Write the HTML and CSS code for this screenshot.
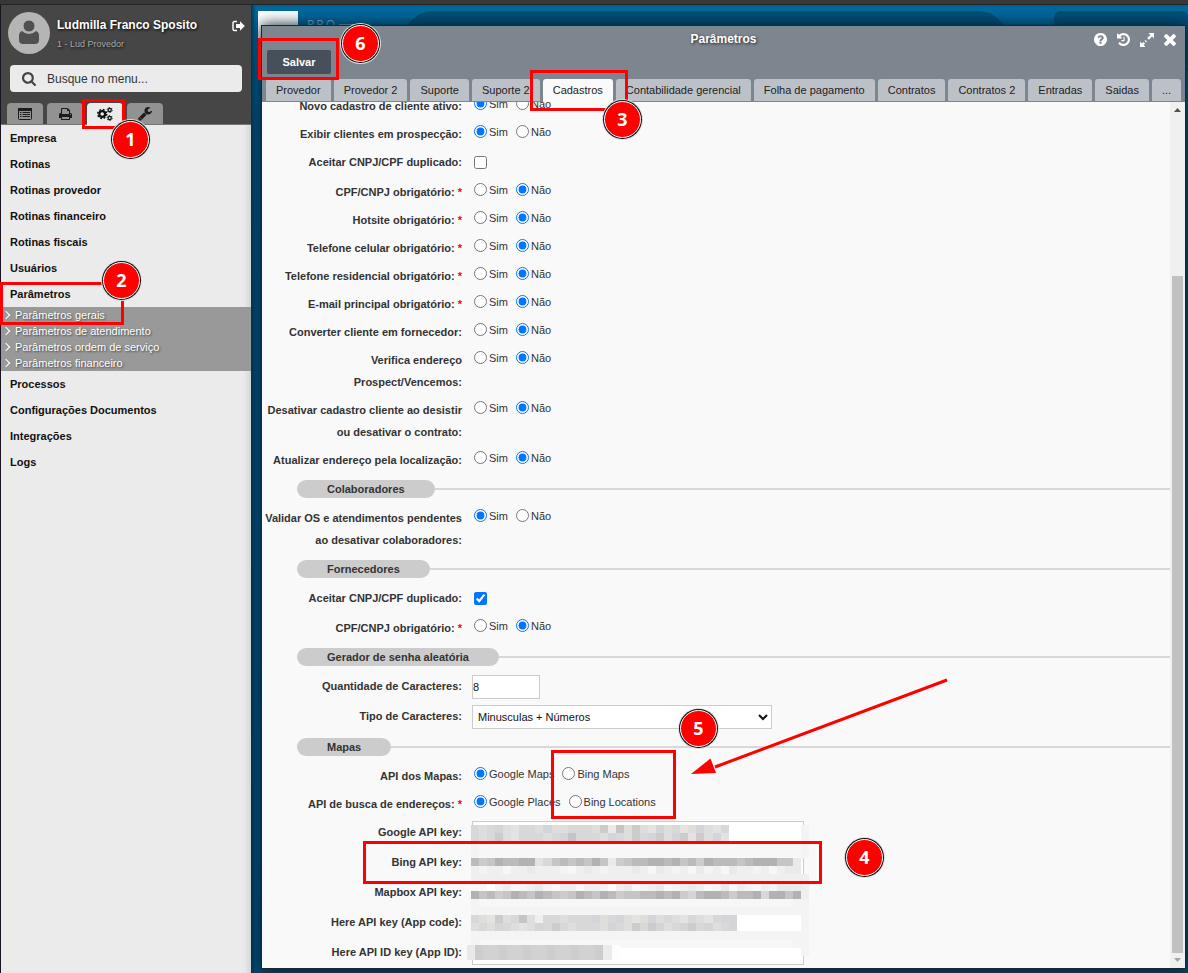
FILE: index.html
```html
<!DOCTYPE html>
<html lang="pt-BR">
<head>
<meta charset="utf-8">
<title>Parâmetros</title>
<link rel="stylesheet" href="styles.css">
</head>
<body>
<div class="topbar"></div>
<div class="app">
  <aside class="sidebar">
    <header class="side-head">
      <div class="user">
        <svg class="avatar" viewBox="0 0 42 42" aria-hidden="true"><circle cx="21" cy="21" r="21" fill="#b5b5b5"/><path d="M14 19q-3 1-3 5v4q0 4 4 4h12q4 0 4-4v-4q0-4-3-5q-3 3-7 3t-7-3z" fill="#505050"/><circle cx="21" cy="14" r="6" fill="#505050" stroke="#b5b5b5"/></svg>
        <div class="user-text">
          <strong class="user-name">Ludmilla Franco Sposito</strong>
          <span class="user-org">1 - Lud Provedor</span>
        </div>
        <button class="icon-btn logout" aria-label="Sair"><svg width="13" height="12" viewBox="0 0 13 12"><path d="M5 1.5H2.5Q1 1.500 1 3v6q0 1.500 1.500 1.500H5" fill="none" stroke="#fff" stroke-width="1.400"/><path d="M4 4h4V1.200L12.800 6 8 10.800V8H4z" fill="#fff"/></svg></button>
      </div>
      <label class="search">
        <svg width="14" height="14" viewBox="64 128 1664 1664" aria-hidden="true"><path fill="#444" d="M1216 832q0-185-131.500-316.500t-316.500-131.500-316.500 131.500-131.500 316.500 131.500 316.500 316.500 131.500 316.500-131.500 131.500-316.500zm512 832q0 52-38 90t-90 38q-54 0-90-38l-343-342q-179 124-399 124-143 0-273.500-55.500t-225-150-150-225-55.500-273.500 55.500-273.500 150-225 225-150 273.500-55.500 273.500 55.500 225 150 150 225 55.500 273.500q0 220-124 399l343 343q37 37 37 90z"/></svg>
        <input class="search-input" type="text" placeholder="Busque no menu..." aria-label="Busque no menu">
      </label>
      <nav class="side-tabs">
        <button class="side-tab" aria-label="Menu"><svg width="14" height="12" viewBox="0 0 14 12"><rect x=".5" y=".5" width="13" height="11" rx="1" fill="none" stroke="#1c1c1c"/><path d="M0 0h14v3H0z" fill="#1c1c1c"/><path d="M2 4.500h1.500M2 6.500h1.500M2 8.500h1.500M4.500 4.500H12M4.500 6.500H12M4.500 8.500H12" stroke="#1c1c1c"/></svg></button>
        <button class="side-tab" aria-label="Imprimir"><svg width="13" height="12" viewBox="64 128 1664 1536"><path fill="#1c1c1c" d="M448 1536h896v-256h-896v256zm0-640h896v-384h-160q-40 0-68-28t-28-68v-160h-640v640zm1152 64q0-26-19-45t-45-19-45 19-19 45 19 45 45 19 45-19 19-45zm128 0v416q0 13-9.500 22.500t-22.500 9.500h-224v160q0 40-28 68t-68 28h-960q-40 0-68-28t-28-68v-160h-224q-13 0-22.500-9.500t-9.500-22.500v-416q0-79 56.500-135.500t135.500-56.500h64v-544q0-40 28-68t68-28h672q40 0 88 20t76 48l152 152q28 28 48 76t20 88v256h64q79 0 135.500 56.500t56.500 135.500z"/></svg></button>
        <button class="side-tab active" aria-label="Configurações"><svg width="16" height="14" viewBox="0 0 16 14"><g fill="none" stroke="#111"><circle cx="5.200" cy="7" r="2.900" stroke-width="2.200"/><circle cx="5.200" cy="7" r="4.500" stroke-width="1.500" stroke-dasharray="1.850 1.684"/><circle cx="12.700" cy="3" r="1.600" stroke-width="1.300"/><circle cx="12.700" cy="3" r="2.500" stroke-width="1" stroke-dasharray="1.300 1.318"/><circle cx="12.700" cy="11" r="1.600" stroke-width="1.300"/><circle cx="12.700" cy="11" r="2.500" stroke-width="1" stroke-dasharray="1.300 1.318"/></g></svg></button>
        <button class="side-tab" aria-label="Ferramentas"><svg width="14" height="14" viewBox="64 128 1664 1664"><path fill="#1c1c1c" d="M448 1472q0-26-19-45t-45-19-45 19-19 45 19 45 45 19 45-19 19-45zm644-420l-682 682q-37 37-90 37-52 0-91-37l-106-108q-38-36-38-90 0-53 38-91l681-681q39 98 114.500 173.500t173.500 114.500zm634-435q0 39-23 106-47 134-164.500 217.500t-258.500 83.500q-185 0-316.500-131.500t-131.500-316.500 131.500-316.500 316.500-131.500q58 0 121.500 16.500t107.500 46.500q16 11 16 28t-16 28l-293 169v224l193 107q5-3 79-48.500t135.500-81 70.500-35.500q15 0 23.500 10t8.500 25z"/></svg></button>
      </nav>
    </header>
    <nav class="menu">
      <a class="menu-item" href="#">Empresa</a>
      <a class="menu-item" href="#">Rotinas</a>
      <a class="menu-item" href="#">Rotinas provedor</a>
      <a class="menu-item" href="#">Rotinas financeiro</a>
      <a class="menu-item" href="#">Rotinas fiscais</a>
      <a class="menu-item" href="#">Usuários</a>
      <a class="menu-item" href="#">Parâmetros</a>
      <div class="submenu">
        <a class="sub-item" href="#">Parâmetros gerais</a>
        <a class="sub-item" href="#">Parâmetros de atendimento</a>
        <a class="sub-item" href="#">Parâmetros ordem de serviço</a>
        <a class="sub-item" href="#">Parâmetros financeiro</a>
      </div>
      <a class="menu-item" href="#">Processos</a>
      <a class="menu-item" href="#">Configurações Documentos</a>
      <a class="menu-item" href="#">Integrações</a>
      <a class="menu-item" href="#">Logs</a>
    </nav>
  </aside>

  <main class="desktop">
    <div class="backdrop" aria-hidden="true">
      <div class="logo"></div>
      <span class="brand">PRO</span>
      <span class="dash"></span>
      <div class="pill"></div>
      <div class="panel"></div>
    </div>
    <section class="window">
      <header class="win-head">
        <div class="titlebar">
          <h1 class="title">Parâmetros</h1>
          <div class="win-icons">
            <button class="icon-btn" aria-label="Ajuda"><svg width="13" height="13" viewBox="128 128 1536 1536"><path fill="#fff" d="M1024 1376v-192q0-14-9-23t-23-9h-192q-14 0-23 9t-9 23v192q0 14 9 23t23 9h192q14 0 23-9t9-23zm256-672q0-88-55.500-163t-138.500-116-170-41q-243 0-371 213-15 24 8 42l132 100q7 6 19 6 16 0 25-12 53-68 86-92 34-24 86-24 48 0 85.500 26t37.500 59q0 38-20 61t-68 45q-63 28-115.500 86.500t-52.500 125.500v36q0 14 9 23t23 9h192q14 0 23-9t9-23q0-19 21.500-49.500t54.500-49.500q32-18 49-28.500t46-35 44.500-48 28-60.500 12.500-81zm384 192q0 209-103 385.500t-279.500 279.500-385.500 103-385.500-103-279.500-279.500-103-385.500 103-385.500 279.500-279.500 385.500-103 385.500 103 279.500 279.500 103 385.500z"/></svg></button>
            <button class="icon-btn" aria-label="Histórico"><svg width="13" height="13" viewBox="128 128 1536 1536"><path fill="#fff" d="M1664 896q0 156-61 298t-164 245-245 164-298 61q-172 0-327-72.500t-264-204.500q-7-10-6.500-22.500t8.500-20.500l137-138q10-9 25-9 16 2 23 12 73 95 179 147t225 52q104 0 198.500-40.500t163.500-109.500 109.500-163.500 40.500-198.500-40.500-198.500-109.500-163.500-163.500-109.500-198.500-40.500q-98 0-188 35.500t-160 101.500l137 138q31 30 14 69-17 40-59 40h-448q-26 0-45-19t-19-45v-448q0-42 40-59 39-17 69 14l130 129q107-101 244.500-156.500t284.500-55.500q156 0 298 61t245 164 164 245 61 298zm-640-288v448q0 14-9 23t-23 9h-320q-14 0-23-9t-9-23v-64q0-14 9-23t23-9h224v-352q0-14 9-23t23-9h64q14 0 23 9t9 23z"/></svg></button>
            <button class="icon-btn" aria-label="Expandir"><svg width="14" height="14" viewBox="0 0 14 14"><path d="M8.500 0H14v5.500l-1.900-1.900-3.200 3.200-1.700-1.700 3.200-3.200zM0 8.500l1.900 1.900 1.500-1.500 1.700 1.700-1.500 1.500L5.500 14H0z" fill="#fff"/><path d="M4.600 7.800l.8-.8 1.600 1.600-.8.800z" fill="#fff"/></svg></button>
            <button class="icon-btn" aria-label="Fechar"><svg width="12" height="12" viewBox="302 366 1188 1188"><path fill="#fff" d="M1490 1322q0 40-28 68l-136 136q-28 28-68 28t-68-28l-294-294-294 294q-28 28-68 28t-68-28l-136-136q-28-28-28-68t28-68l294-294-294-294q-28-28-28-68t28-68l136-136q28-28 68-28t68 28l294 294 294-294q28-28 68-28t68 28l136 136q28 28 28 68t-28 68l-294 294 294 294q28 28 28 68z"/></svg></button>
          </div>
        </div>
        <div class="toolbar"><button class="save">Salvar</button></div>
        <nav class="tabs">
          <button class="tab">Provedor</button>
          <button class="tab">Provedor 2</button>
          <button class="tab">Suporte</button>
          <button class="tab">Suporte 2</button>
          <button class="tab active">Cadastros</button>
          <button class="tab">Contabilidade gerencial</button>
          <button class="tab">Folha de pagamento</button>
          <button class="tab">Contratos</button>
          <button class="tab">Contratos 2</button>
          <button class="tab">Entradas</button>
          <button class="tab">Saidas</button>
          <button class="tab">...</button>
        </nav>
      </header>
      <div class="win-body">
        <form class="form">
          <div class="row"><span class="label" id="l1">Novo cadastro de cliente ativo:</span><div class="options" role="radiogroup" aria-labelledby="l1"><label class="opt"><input type="radio" name="r1" checked>Sim</label><label class="opt"><input type="radio" name="r1">Não</label></div></div>
          <div class="row"><span class="label" id="l2">Exibir clientes em prospecção:</span><div class="options" role="radiogroup" aria-labelledby="l2"><label class="opt"><input type="radio" name="r2" checked>Sim</label><label class="opt"><input type="radio" name="r2">Não</label></div></div>
          <div class="row tall"><label class="label" for="c1">Aceitar CNPJ/CPF duplicado:</label><div class="check"><input type="checkbox" id="c1"></div></div>
          <div class="row"><span class="label" id="l3">CPF/CNPJ obrigatório: <b class="req">*</b></span><div class="options" role="radiogroup" aria-labelledby="l3"><label class="opt"><input type="radio" name="r3">Sim</label><label class="opt"><input type="radio" name="r3" checked>Não</label></div></div>
          <div class="row"><span class="label" id="l4">Hotsite obrigatório: <b class="req">*</b></span><div class="options" role="radiogroup" aria-labelledby="l4"><label class="opt"><input type="radio" name="r4">Sim</label><label class="opt"><input type="radio" name="r4" checked>Não</label></div></div>
          <div class="row"><span class="label" id="l5">Telefone celular obrigatório: <b class="req">*</b></span><div class="options" role="radiogroup" aria-labelledby="l5"><label class="opt"><input type="radio" name="r5">Sim</label><label class="opt"><input type="radio" name="r5" checked>Não</label></div></div>
          <div class="row"><span class="label" id="l6">Telefone residencial obrigatório: <b class="req">*</b></span><div class="options" role="radiogroup" aria-labelledby="l6"><label class="opt"><input type="radio" name="r6">Sim</label><label class="opt"><input type="radio" name="r6" checked>Não</label></div></div>
          <div class="row"><span class="label" id="l7">E-mail principal obrigatório: <b class="req">*</b></span><div class="options" role="radiogroup" aria-labelledby="l7"><label class="opt"><input type="radio" name="r7">Sim</label><label class="opt"><input type="radio" name="r7" checked>Não</label></div></div>
          <div class="row"><span class="label" id="l8">Converter cliente em fornecedor:</span><div class="options" role="radiogroup" aria-labelledby="l8"><label class="opt"><input type="radio" name="r8">Sim</label><label class="opt"><input type="radio" name="r8" checked>Não</label></div></div>
          <div class="row"><span class="label" id="l9">Verifica endereço Prospect/Vencemos:</span><div class="options" role="radiogroup" aria-labelledby="l9"><label class="opt"><input type="radio" name="r9">Sim</label><label class="opt"><input type="radio" name="r9" checked>Não</label></div></div>
          <div class="row"><span class="label" id="l10">Desativar cadastro cliente ao desistir ou desativar o contrato:</span><div class="options" role="radiogroup" aria-labelledby="l10"><label class="opt"><input type="radio" name="r10">Sim</label><label class="opt"><input type="radio" name="r10" checked>Não</label></div></div>
          <div class="row"><span class="label" id="l11">Atualizar endereço pela localização:</span><div class="options" role="radiogroup" aria-labelledby="l11"><label class="opt"><input type="radio" name="r11">Sim</label><label class="opt"><input type="radio" name="r11" checked>Não</label></div></div>

          <h2 class="section"><span class="section-name">Colaboradores</span></h2>
          <div class="row"><span class="label" id="l12">Validar OS e atendimentos pendentes ao desativar colaboradores:</span><div class="options" role="radiogroup" aria-labelledby="l12"><label class="opt"><input type="radio" name="r12" checked>Sim</label><label class="opt"><input type="radio" name="r12">Não</label></div></div>

          <h2 class="section"><span class="section-name">Fornecedores</span></h2>
          <div class="row tall"><label class="label" for="c2">Aceitar CNPJ/CPF duplicado:</label><div class="check"><input type="checkbox" id="c2" checked></div></div>
          <div class="row"><span class="label" id="l13">CPF/CNPJ obrigatório: <b class="req">*</b></span><div class="options" role="radiogroup" aria-labelledby="l13"><label class="opt"><input type="radio" name="r13">Sim</label><label class="opt"><input type="radio" name="r13" checked>Não</label></div></div>

          <h2 class="section"><span class="section-name">Gerador de senha aleatória</span></h2>
          <div class="row tall"><label class="label" for="qtd">Quantidade de Caracteres:</label><input class="field short" id="qtd" type="text" value="8"></div>
          <div class="row tall"><label class="label" for="tipo">Tipo de Caracteres:</label><select class="field choice" id="tipo"><option>Minusculas + Números</option></select></div>

          <h2 class="section"><span class="section-name">Mapas</span></h2>
          <div class="row"><span class="label" id="l14">API dos Mapas:</span><div class="options" role="radiogroup" aria-labelledby="l14"><label class="opt"><input type="radio" name="r14" checked>Google Maps</label><label class="opt"><input type="radio" name="r14">Bing Maps</label></div></div>
          <div class="row"><span class="label" id="l15">API de busca de endereços: <b class="req">*</b></span><div class="options" role="radiogroup" aria-labelledby="l15"><label class="opt"><input type="radio" name="r15" checked>Google Places</label><label class="opt"><input type="radio" name="r15">Bing Locations</label></div></div>
          <div class="keys">
            <div class="row tall"><label class="label" for="k1">Google API key:</label><input class="field key" id="k1" type="text"></div>
            <div class="row tall"><label class="label" for="k2">Bing API key:</label><input class="field key" id="k2" type="text"></div>
            <div class="row tall"><label class="label" for="k3">Mapbox API key:</label><input class="field key" id="k3" type="text"></div>
            <div class="row tall"><label class="label" for="k4">Here API key (App code):</label><input class="field key" id="k4" type="text"></div>
            <div class="row tall"><label class="label" for="k5">Here API ID key (App ID):</label><input class="field key" id="k5" type="text"></div>
            <svg class="mosaic" id="mosaic" width="345" height="140" viewBox="0 0 345 140" shape-rendering="crispEdges" aria-hidden="true"></svg>
          </div>
        </form>
        <div class="scrollbar" aria-hidden="true">
          <svg width="15" height="15" viewBox="0 0 15 15"><path d="M4 10h7L7.500 6z" fill="#505050"/></svg>
          <div class="track"><div class="thumb"></div></div>
          <svg width="15" height="15" viewBox="0 0 15 15"><path d="M4 5h7L7.500 9z" fill="#a3a3a3"/></svg>
        </div>
      </div>
    </section>
  </main>
</div>

<div class="notes">
  <div class="mark mark-1"></div><div class="mark mark-2"></div><div class="mark mark-3"></div>
  <div class="mark mark-4"></div><div class="mark mark-5"></div><div class="mark mark-6"></div>
  <svg class="arrow" width="260" height="100" viewBox="0 0 260 100" aria-hidden="true"><path d="M256 5L24 92" stroke="#f00" stroke-width="3"/><path d="M0 99L19.500 83.500 25 98z" fill="#f00"/></svg>
  <span class="badge badge-1">1</span><span class="badge badge-2">2</span><span class="badge badge-3">3</span>
  <span class="badge badge-4">4</span><span class="badge badge-5">5</span><span class="badge badge-6">6</span>
</div>
<script src="mosaic.js"></script>
</body>
</html>
```

FILE: mosaic.js
```js
const shades = {
  a: '#b2b2b3', b: '#bcbbba', c: '#c5c5c6', d: '#cdcccb', e: '#d3d5d8', f: '#d8d8d8',
  g: '#dededd', h: '#e4e3e1', i: '#eaeaea', j: '#efefef', k: '#f4f4f4', l: '#f7f7f7'
};
// Each row: top, height, one letter per cell ('.' is a white cell).
const rows = [
  [5, 8, 'fgfeghffgeggfffgdicgdghegfhgeghf.........k'],
  [13, 8, 'fgfdghfffgfecfffgefgdfedgedhdgeh.........k'],
  [21, 9, 'kllllllllllllllllllllllllllllllllllllllllk'],
  [30, 8, 'kllllllllllllllllllllllllllllllllllllllllk'],
  [38, 8, 'bdcabbaahfcbcbcacidcbbaabacbdabbbcbaaacci'],
  [46, 8, 'jkjjljjijjjkljijkjjjijlijkjlikjlijjkjljii'],
  [54, 10, 'jjjjjjjjjjjjjjjjjjjjjjjjjjjjjjjjjjjjjjjjjj'],
  [64, 7, 'll.kjlkjikljjljjk.jilkjilkjijlkiljkljkiiij'],
  [71, 8, 'acbdcabcabcdcabcabdccbbabadebaabdbbafaacaj'],
  [79, 8, 'klllllllllllllllllllllllllllllllllllllllkk'],
  [87, 8, 'kkkkkkkkkkkkkkkkkkkkkkkkkkkkkkkkkkkkkkkkkk'],
  [95, 8, 'fghdgfcgjffgfffegfeghgegfghfghfee........k'],
  [103, 8, 'gfgefghgefdfgfffgefgdfdegfedfegfe........k'],
  [111, 9, 'kkkkkkkkkkkkkkkkkkkkkkkkkkkkkkkkkkkkkkkkkk'],
  [120, 8, 'klllllllllllllllllllllllllllllllllllllllkk'],
  [128, 8, '.........................................k']
];
const svg = document.getElementById('mosaic');
function cell(x, y, w, h, fill) {
  const r = document.createElementNS('http://www.w3.org/2000/svg', 'rect');
  r.setAttribute('x', x);
  r.setAttribute('y', y);
  r.setAttribute('width', w);
  r.setAttribute('height', h);
  r.setAttribute('fill', fill);
  svg.appendChild(r);
}
const left = i => 4 + Math.round(i * 8.05);
rows.forEach(([y, h, line]) => {
  [...line].forEach((ch, i) => cell(left(i), y, left(i + 1) - left(i), h, shades[ch] || '#ffffff'));
});
cell(0, 125, 8, 15, '#e9e9e9');
[...'ffffeffffffffffe'].forEach((ch, i) => cell(8 + i * 8, 125, 8, 15, i % 3 ? '#d2d2d2' : '#cdcdcd'));
cell(136, 125, 9, 15, '#ebebec');
cell(145, 125, 8, 15, '#fdfdfd');
```

FILE: styles.css
```css
* { box-sizing: border-box; }
body {
  margin: 0;
  min-height: 100vh;
  display: flex;
  flex-direction: column;
  position: relative;
  font: 11px/16px "Liberation Sans", Arial, sans-serif;
  color: #333;
  background: #383838;
}
button, input, select { font: inherit; color: inherit; }
button { border: 0; padding: 0; background: none; }
a { color: inherit; text-decoration: none; }
svg { display: block; }
.topbar { height: 5px; background: #383838; border-bottom: 1px solid #242424; }
.app { flex: 1; display: grid; grid-template-columns: 251px minmax(0, 1fr); }

/* Sidebar */
.sidebar { border-left: 1px solid #1b1420; background: #ebebeb; box-shadow: inset -6px 0 6px -4px #ccc; }
.side-head { background: #464646; border-bottom: 1px solid #777; padding: 7px 8px 0 7px; }
.user { display: flex; height: 42px; }
.avatar { width: 42px; height: 42px; }
.user-text { flex: 1; display: flex; flex-direction: column; padding: 4px 0 0 7px; text-shadow: 1px 1px 3px #000; }
.user-name { font-size: 12px; line-height: 18px; color: #fff; }
.user-org { font-size: 9px; line-height: 20px; color: #a9a9a9; }
.icon-btn { display: block; }
.logout { align-self: flex-start; padding: 8px 0 0; margin-right: -2px; }
.search {
  display: flex; align-items: center; gap: 11px;
  height: 27px; margin: 11px 1px 11px 2px; padding: 0 12px;
  background: #ebebeb; border-radius: 4px;
}
.search-input { flex: 1; min-width: 0; border: 0; padding: 0; background: none; font-size: 12px; }
.search-input::placeholder { color: #333; opacity: 1; }
.side-tabs { display: flex; gap: 4px; margin-left: -1px; }
.side-tab {
  display: flex; align-items: center; justify-content: center;
  width: 36px; height: 21px; background: #929292; border-radius: 4px 4px 0 0;
}
.side-tab.active { height: 22px; margin-bottom: -1px; background: #ebebeb; }
.menu { display: flex; flex-direction: column; }
.menu-item { padding: 5px 9px; font-weight: bold; color: #111; }
.submenu { display: flex; flex-direction: column; background: #999; color: #fff; text-shadow: 1px 1px 2px #444; }
.sub-item { display: flex; align-items: center; gap: 6px; padding-left: 2px; }
.sub-item::before {
  content: ""; width: 5px; height: 5px;
  border: solid #fff; border-width: 1px 1px 0 0; transform: rotate(45deg);
}

/* Desktop behind the window */
.desktop {
  position: relative; display: flex; padding: 20px 2px 4px 10px; overflow: hidden;
  background: linear-gradient(#006a9f, #00527c 120px, #004d76);
  box-shadow: inset 4px 0 4px -2px #00304a;
}
.backdrop { position: absolute; inset: 6px 0 auto 7px; height: 60px; display: flex; }
.logo { width: 40px; height: 60px; background: #fff; }
.brand { margin: 7px 0 0 9px; font: 12px/14px "Open Sans", sans-serif; color: #7fb0cc; letter-spacing: 2px; }
.dash { width: 14px; height: 1px; margin: 13px 0 0 2px; background: #7fb0cc; }
.pill { flex: 1; margin: 0 46px 0 50px; border-radius: 30px; background: #005078; }
.panel { width: 134px; border-radius: 6px 6px 0 0; background: #005078; }

/* Window */
.window {
  position: relative; flex: 1; min-width: 0; display: flex; flex-direction: column;
  border: 1px solid #20262c; background: #f9f9f9; box-shadow: 0 0 14px #001a2a;
}
.win-head { background: #7d868f; border-bottom: 1px solid #7d868f; }
.titlebar { display: grid; grid-template-columns: 1fr auto 1fr; height: 24px; }
.title { grid-column: 2; margin: 0; font-size: 12px; line-height: 26px; color: #fff; text-shadow: 1px 1px 3px #222; }
.win-icons { display: flex; justify-content: flex-end; align-items: center; gap: 10px; padding: 1px 9px 0 0; }
.toolbar { padding: 0 5px 5px; }
.save {
  display: block; width: 64px; height: 24px; border-radius: 2px;
  background: #464f5a; color: #fff; font-weight: bold;
}
.tabs { display: flex; gap: 3px; padding: 0 4px; height: 22px; }
.tab { padding: 0 10px; background: #bcc1c8; color: #222; border-radius: 3px 3px 0 0; white-space: nowrap; }
.tab.active { height: 23px; padding-bottom: 1px; background: #fafafa; }
.win-body { flex: 1; display: flex; overflow: hidden; }
.form { flex: 1; min-width: 0; margin-top: -10px; margin-bottom: -1px; }

/* Form rows */
.row { display: grid; grid-template-columns: 200px minmax(0, 1fr); column-gap: 10px; padding: 3px 0; align-items: start; }
.row.tall { min-height: 30px; }
.label { text-align: right; font-weight: bold; line-height: 22px; }
.req { color: #f00; }
.options { display: flex; gap: 8px; padding: 1px 0 0 2px; }
.opt { display: flex; align-items: flex-start; gap: 2px; }
.opt input, .check input { width: 13px; height: 13px; margin: 1px 0 0; }
.check { padding: 4px 0 0 2px; display: flex; }
.section { display: flex; align-items: center; height: 30px; margin: 0 0 0 35px; font-size: 11px; }
.section::after { content: ""; flex: 1; height: 2px; background: #d8d8d8; }
.section-name { padding: 1px 30px; border-radius: 9px; background: #ccc; }
.field { height: 24px; border: 1px solid #ccc; border-radius: 0; background: #fff; color: #111; padding: 0 1px; }
.short { width: 68px; padding: 0; }
.choice { width: 300px; }
.key { width: 332px; }
.keys { position: relative; }
.mosaic { position: absolute; left: 205px; top: 2px; }

/* Scrollbar */
.scrollbar { width: 15px; display: flex; flex-direction: column; background: #f0f0f0; }
.track { flex: 1; display: flex; flex-direction: column; justify-content: flex-end; padding: 0 2px; }
.thumb { height: 81%; background: #c1c1c1; }

/* Step annotations */
.notes { position: absolute; inset: 0; overflow: hidden; pointer-events: none; }
.mark { position: absolute; border: 3px solid #f00; }
.mark-1 { left: 82px; top: 99px; width: 43px; height: 30px; }
.mark-2 { left: 0; top: 282px; width: 124px; height: 43px; }
.mark-3 { left: 530px; top: 70px; width: 98px; height: 41px; }
.mark-4 { left: 363px; top: 841px; width: 459px; height: 43px; }
.mark-5 { left: 551px; top: 750px; width: 125px; height: 69px; }
.mark-6 { left: 258px; top: 38px; width: 81px; height: 42px; }
.arrow { position: absolute; left: 691px; top: 675px; }
.badge {
  position: absolute; width: 37px; height: 37px; border-radius: 50%;
  border: 1px solid #fff; background: #f00; box-shadow: 0 0 0 1px #111, 0 0 0 2px #ddd;
  font: bold 18px/35px "Open Sans", sans-serif; color: #fff; text-align: center;
}
.badge-1 { left: 112px; top: 121px; }
.badge-2 { left: 103px; top: 262px; }
.badge-3 { left: 604px; top: 101px; }
.badge-4 { left: 846px; top: 839px; }
.badge-5 { left: 680px; top: 710px; }
.badge-6 { left: 342px; top: 25px; }
```
